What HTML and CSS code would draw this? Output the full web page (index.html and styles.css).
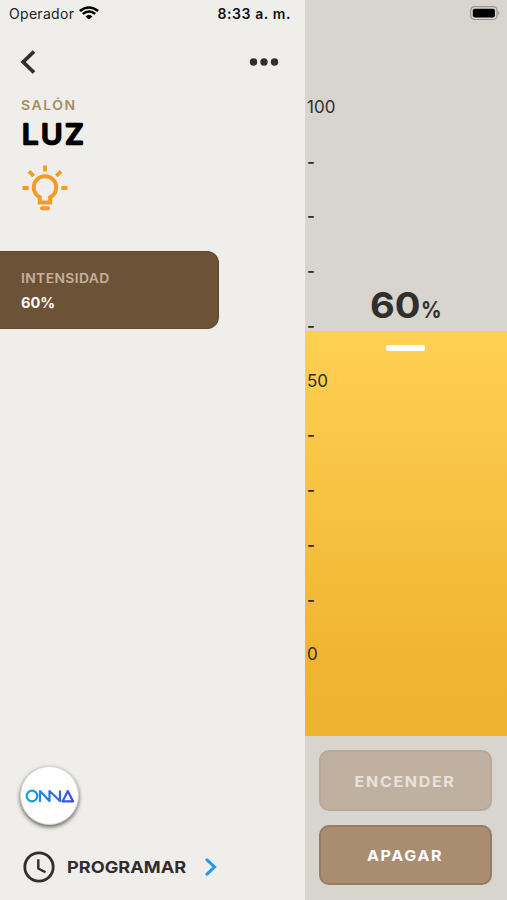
FILE: index.html
```html
<!DOCTYPE html>
<html lang="es">
<head>
<meta charset="utf-8">
<title>Luz</title>
<link rel="stylesheet" href="styles.css">
</head>
<body>
<main class="app">
  <section class="details">
    <div class="status">
      <span class="carrier">Operador</span>
      <svg class="wifi" width="20" height="14" viewBox="0 0 18 14" preserveAspectRatio="none" fill="none" stroke="#000" stroke-width="2.4"><path d="M.8 5Q9-2.2 17.2 5M3.4 7.9Q9 3.2 14.6 7.9"/><path d="M5.9 10.4Q9 7.8 12.1 10.4L9 13.4Z" fill="#000" stroke="none"/></svg>
      <span class="time">8:33 a. m.</span>
    </div>
    <nav class="nav">
      <svg width="16" height="24" viewBox="0 0 16 24" fill="none" stroke="#302f2d" stroke-width="3.8"><path d="M14 1.5 3.2 12 14 22.5"/></svg>
      <svg width="30" height="8" viewBox="0 0 30 8" fill="#302f2d"><circle cx="4.5" cy="4" r="3.7"/><circle cx="15" cy="4" r="3.7"/><circle cx="25.5" cy="4" r="3.7"/></svg>
    </nav>
    <header class="heading">
      <div class="room"><span>SALÓN</span></div>
      <h1><svg width="80" height="40" viewBox="0 -5 80 40"><text class="name" x="0" y="23" transform="translate(.9 0) scale(1.07 1)">LUZ</text></svg></h1>
      <svg class="bulb" width="46" height="46" viewBox="0 0 46 46" fill="none" stroke="#f39b25" stroke-width="4"><path d="M17.8 37.5v-5.2a11.2 11.2 0 1 1 10.4 0v5.2Z"/><path d="M20 43.2h6" stroke-linecap="round"/><path d="M23 .5v6M.5 23h6.2M39.3 23h6.2M7 6.3l4.7 4.7M39 6.3 34.3 11" stroke-width="3.8"/></svg>
    </header>
    <div class="card">
      <div class="card-label"><span class="wide">INTENSIDAD</span></div>
      <div class="card-value"><span class="wide">60%</span></div>
    </div>
    <footer class="footer">
      <div class="brand"><svg width="50" height="14" viewBox="0 0 50 14" fill="none" stroke-width="2.2" stroke-linejoin="round"><defs><linearGradient id="blue" x1="0" x2="50" y1="0" y2="0" gradientUnits="userSpaceOnUse"><stop stop-color="#09a9ef"/><stop offset="1" stop-color="#4545df"/></linearGradient></defs><g stroke="url(#blue)"><circle cx="7" cy="7" r="5.3"/><path d="M15 13V2l9.5 10V2L35 12V1.5M42.8 2 37.5 12.4h10.6Z"/></g></svg></div>
      <div class="schedule">
        <svg width="32" height="32" viewBox="0 0 32 32" fill="none" stroke="#302f2d"><circle cx="16" cy="16" r="14.2" stroke-width="2.8"/><path d="M15.3 8.3v9.2l7.2 3.8" stroke-width="2.4"/></svg>
        <span class="schedule-text"><span class="wide">PROGRAMAR</span></span>
        <svg class="next" width="12" height="18" viewBox="0 0 12 18" fill="none" stroke="#1c9cf0" stroke-width="3" stroke-linecap="round"><path d="m2 1.8 7.5 7.2L2 16.2"/></svg>
      </div>
    </footer>
  </section>
  <section class="control">
    <div class="slider">
      <div class="empty">
        <svg class="battery" width="31" height="15" viewBox="0 0 31 15"><rect x=".7" y=".7" width="26.3" height="12.8" rx="3.7" fill="none" stroke="#96958f" stroke-width="1.2"/><rect x="2.8" y="2.8" width="22.1" height="8.6" rx="1.8"/><path d="M28.2 4.8q2.4 2.3 0 4.6Z" fill="#96958f"/></svg>
        <div class="level"><span class="number">60</span><span class="percent">%</span></div>
      </div>
      <div class="fill"><div class="handle"></div></div>
      <div class="scale"><span>100</span><span class="tick">-</span><span class="tick">-</span><span class="tick">-</span><span class="tick">-</span><span>50</span><span class="tick">-</span><span class="tick">-</span><span class="tick">-</span><span class="tick">-</span><span>0</span></div>
    </div>
    <div class="actions">
      <button class="button disabled"><span>ENCENDER</span></button>
      <button class="button"><span>APAGAR</span></button>
    </div>
  </section>
</main>
</body>
</html>
```
FILE: styles.css
```css
* { box-sizing: border-box; }
body { margin: 0; font-family: Inter, "Liberation Sans", sans-serif; color: #302f2d; }
.app { display: flex; width: 507px; height: 900px; overflow: hidden; }
.details { width: 305px; background: #efeeea; display: flex; flex-direction: column; flex-shrink: 0; }
.status { height: 28px; display: flex; align-items: center; padding: 0 14px 2px 9px; font-size: 14px; color: #222; }
.carrier { width: 65px; letter-spacing: .3px; }
.wifi { margin: -1px 0 0 5px; }
.time { margin-left: auto; font-weight: 600; letter-spacing: .6px; color: #111; }
.nav { height: 68px; display: flex; justify-content: space-between; align-items: center; padding: 0 26px 0 20px; }
.heading { padding-left: 21px; height: 155px; }
.room { font-size: 12.5px; line-height: 18px; font-weight: 600; letter-spacing: 1.35px; color: #a78d62; }
.room span { display: inline-block; transform: translateY(.6px) scaleX(1.12); transform-origin: left; }
h1 { margin: 2px 0 0; height: 40px; line-height: 0; }
.name { font: 400 27px Inter, sans-serif; letter-spacing: 2.6px; fill: #000; stroke: #000; stroke-width: 2.5px; stroke-linejoin: round; }
.bulb { display: block; margin: 9px 0 0 1px; }
.card { width: 218.5px; height: 78px; padding: 18px 0 0 21px; background: #6c5237; border: 1.5px solid #5f482d; border-left: 0; border-radius: 0 12px 12px 0; }
.card-label { font-size: 12.6px; line-height: 17px; font-weight: 600; letter-spacing: .35px; color: #c4b19d; }
.card-value { font-size: 14.3px; line-height: 18px; font-weight: 700; letter-spacing: 0; margin-top: 7px; color: #fff; }
.card-value .wide { transform: scaleX(1.02); }
.wide { display: inline-block; transform: scaleX(1.1); transform-origin: left; }
.footer { margin-top: auto; height: 134px; padding-left: 20px; }
.brand { width: 59px; height: 59px; border-radius: 50%; display: flex; align-items: center; justify-content: center; background: #fff; border: 1px solid #d7d6d3; box-shadow: 0 2px 4px #0009; }
.schedule { display: flex; align-items: center; height: 32px; margin: 26px 0 0 3px; }
.schedule-text { width: 119px; margin-left: 12px; font-size: 16.5px; font-weight: 700; letter-spacing: 0; }
.next { margin-left: 19px; }
.control { flex: 1; background: #d8d5ce; }
.slider { height: 736px; position: relative; }
.empty { height: 331px; display: flex; flex-direction: column; justify-content: space-between; }
.battery { align-self: flex-end; margin: 6px 6px 0 0; }
.level { height: 51px; display: flex; align-items: baseline; padding-left: 65px; line-height: 50px; }
.number { width: 50px; font-size: 36px; font-weight: 700; transform: scaleX(1.06); transform-origin: left; }
.percent { font-size: 22.5px; font-weight: 700; margin-left: 1px; transform: scaleX(.9); transform-origin: left; }
.fill { height: 405px; padding-top: 14px; background: linear-gradient(#ffd052, #f0b332 85%, #efb231); }
.handle { width: 39px; height: 6px; border-radius: 2px; background: #fff; margin-left: 81px; }
.scale { position: absolute; left: 2px; top: 79.6px; display: grid; grid-auto-rows: 54.75px; align-items: center; font-size: 17px; }
.tick { font-weight: 600; }
.actions { padding: 14px 15px 14px 14px; display: grid; gap: 14px; }
.button { height: 60.5px; border: 2px solid #967b62; border-radius: 10px; background: #aa8d71; color: #fff; font: 700 14.3px Inter, sans-serif; letter-spacing: 1.5px; padding: 2px 0 0; }
.button span { display: inline-block; transform: scaleX(1.12); }
.disabled { background: #c0b0a0; border-color: #b7a89a; color: #e9e1da; }
```
